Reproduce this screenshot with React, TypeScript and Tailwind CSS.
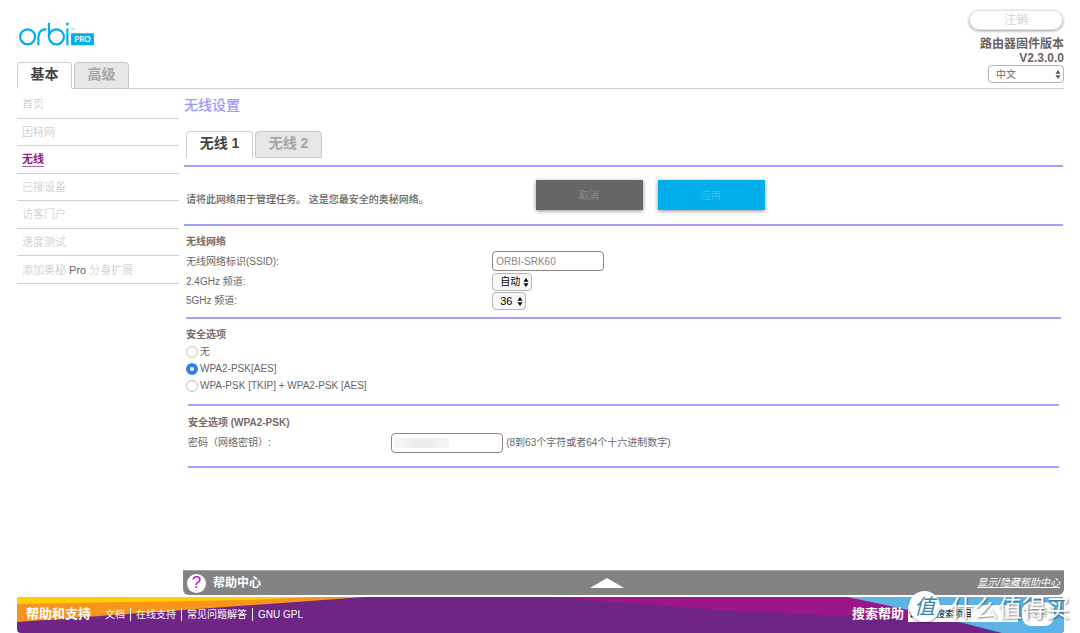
import { ReactNode, useState } from "react";

const menu = ["首页", "因特网", "无线", "已接设备", "访客门户", "速度测试"];
const securityOptions = ["无", "WPA2-PSK[AES]", "WPA-PSK [TKIP] + WPA2-PSK [AES]"];
const supportLinks = ["文档", "在线支持", "常见问题解答", "GNU GPL"];

function Logo() {
  return (
    <svg
      width="76"
      height="25"
      viewBox="0 0 76 25"
      fill="none"
      role="img"
      aria-label="orbi PRO"
    >
      <g stroke="#00aeea" strokeWidth="2.2">
        <circle cx="8.6" cy="14.8" r="7.5" />
        <path d="M19.4 23.3V15.1C19.4 10.3 22.2 7.4 27.4 7.1" />
        <path d="M29.9 0.8V14.8" />
        <circle cx="37.4" cy="14.8" r="7.5" />
        <path d="M48.4 6.5V23.3" />
      </g>
      <rect x="47.1" y="0.7" width="2.6" height="2.6" fill="#00aeea" />
      <path
        d="M52.3 6.5H54M53.1 6.5V8M54.4 8V6.5L55 7.5L55.7 6.5V8"
        stroke="#7fd3f2"
        strokeWidth="0.5"
      />
      <rect x="52" y="11.2" width="23" height="12" rx="1" fill="#00aeea" />
      <text
        x="63.5"
        y="20"
        fill="#fff"
        fontSize="8"
        fontWeight="700"
        textAnchor="middle"
        fontFamily="Lato, sans-serif"
      >
        PRO
      </text>
    </svg>
  );
}

type TabProps = { active: boolean; className?: string; onClick: () => void; children: ReactNode };

function Tab({ active, className = "", onClick, children }: TabProps) {
  return (
    <button
      role="tab"
      aria-selected={active}
      onClick={onClick}
      className={`h-[27px] rounded-t-[4px] border pb-[2px] text-[14px] font-bold ${
        active
          ? "border-[#cfcfcf] border-b-white bg-white text-[#444]"
          : "border-[#c8c8c8] bg-[#e7e7e7] text-[#a5a5a5]"
      } ${className}`}
    >
      {children}
    </button>
  );
}

type PickerProps = { id: string; label?: string; options: string[]; className: string };

function Picker({ id, label, options, className }: PickerProps) {
  return (
    <span className="relative inline-flex justify-self-start">
      <select
        id={id}
        aria-label={label}
        className={`h-[18px] appearance-none rounded-[4px] border border-[#b5b5b5] pl-[7px] ${className}`}
      >
        {options.map((option) => (
          <option key={option}>{option}</option>
        ))}
      </select>
      <svg
        className="pointer-events-none absolute top-[5px] right-[3px]"
        width="6"
        height="9"
        viewBox="0 0 6 9"
        fill={id === "language" ? "#5d5350" : "#000"}
      >
        <path d="M3 0L5.5 3.7H0.5ZM3 9L5.5 5.3H0.5Z" />
      </svg>
    </span>
  );
}

function Header() {
  const [tab, setTab] = useState("基本");
  return (
    <header className="flex items-end justify-between border-b border-[#cfcfcf] pt-[10px]">
      <div>
        <a href="#" className="ml-[2px] block w-fit">
          <Logo />
        </a>
        <div role="tablist" className="mt-[15px] -mb-px flex gap-[2px]">
          {["基本", "高级"].map((name) => (
            <Tab key={name} active={tab === name} className="w-[55px]" onClick={() => setTab(name)}>
              {name}
            </Tab>
          ))}
        </div>
      </div>
      <div className="flex flex-col items-end pb-[5px] text-[#6f625f]">
        <button className="mr-px h-5 w-[94px] rounded-full border border-[#e2e2e2] bg-white text-[12px] leading-[18px] font-light text-[#bdbdbd] shadow-[0_1px_3px_rgba(0,0,0,0.4)]">
          注销
        </button>
        <p className="mt-[7px] text-right text-[12px] leading-[14px] font-bold">
          路由器固件版本
          <br />
          V2.3.0.0
        </p>
        <Picker
          id="language"
          label="语言"
          options={["中文", "English"]}
          className="w-[76px] bg-white text-[10px] text-[#6f625f]"
        />
      </div>
    </header>
  );
}

function Sidebar() {
  return (
    <nav className="w-[162px] shrink-0 pt-[2px]">
      <ul className="flex h-[193px] flex-col text-[11px] font-light text-[#c4c0bf]">
        {menu.map((item) => (
          <li key={item} className="flex flex-1 items-center border-b border-[#d0d0d0] pl-[5px]">
            <a
              href="#"
              className={
                item === "无线"
                  ? "border-b border-[#b565ae] leading-[14px] font-bold text-[#951b88]"
                  : ""
              }
            >
              {item}
            </a>
          </li>
        ))}
        <li className="flex flex-1 items-center border-b border-[#d0d0d0] pl-[5px]">
          <a href="#">
            添加奥秘 <span className="font-normal text-[#6f625f]">Pro</span> 分身扩展
          </a>
        </li>
      </ul>
    </nav>
  );
}

function WirelessSettings() {
  const [network, setNetwork] = useState("无线 1");
  return (
    <section className="text-[10px] text-[#666]">
      <h1 className="pt-[6px] text-[14px] leading-[20px] font-medium text-[#9a98ff]">无线设置</h1>
      <div
        role="tablist"
        className="flex gap-[2px] border-b-2 border-[#a3a1ff] pt-[16px] pb-[7px] pl-[2px]"
      >
        {["无线 1", "无线 2"].map((name) => (
          <Tab
            key={name}
            active={network === name}
            className="w-[67px]"
            onClick={() => setNetwork(name)}
          >
            {name}
          </Tab>
        ))}
      </div>

      <div className="grid grid-cols-[2fr_3fr] items-center border-b-2 border-[#a3a1ff] pt-[13px] pb-[14px]">
        <p className="pt-[8px] pl-[2px] font-medium text-[#666]">
          请将此网络用于管理任务。 这是您最安全的奥秘网络。
        </p>
        <div className="flex gap-[15px]">
          <button className="h-[30px] w-[107px] bg-[#666] font-light text-[#999] shadow-[0_1px_4px_rgba(0,0,0,0.45)]">
            取消
          </button>
          <button className="h-[30px] w-[107px] bg-[#00aeea] font-light text-[#5fc6ea] shadow-[0_1px_4px_rgba(0,0,0,0.45)]">
            应用
          </button>
        </div>
      </div>

      <div className="mx-[2px] border-b-2 border-[#a3a1ff] pt-[8px] pb-[7px]">
        <h2 className="leading-[16px] font-bold text-[#7a6a66]">无线网络</h2>
        <div className="grid h-[22px] grid-cols-[7fr_13fr] items-center">
          <label htmlFor="ssid">无线网络标识(SSID):</label>
          <input
            id="ssid"
            defaultValue="ORBI-SRK60"
            className="h-[20px] w-[112px] rounded-[4px] border border-[#8f8481] px-[3px] text-[10px] text-[#8f8481]"
          />
        </div>
        <div className="grid h-[19px] grid-cols-[7fr_13fr] items-center">
          <label htmlFor="channel24">2.4GHz 频道:</label>
          <Picker
            id="channel24"
            options={["自动", "1", "6", "11"]}
            className="w-[40px] bg-[#f8f8f8] text-[10px] text-black"
          />
        </div>
        <div className="grid h-[19px] grid-cols-[7fr_13fr] items-center">
          <label htmlFor="channel5">5GHz 频道:</label>
          <Picker
            id="channel5"
            options={["36", "40", "44", "48"]}
            className="w-[34px] bg-[#f8f8f8] text-[11px] text-black"
          />
        </div>
      </div>

      <fieldset className="mx-[2px] pt-[8px] pb-[10px]">
        <h2 className="leading-[16px] font-bold text-[#7a6a66]">安全选项</h2>
        {securityOptions.map((option, i) => (
          <label key={option} className="flex h-[17px] items-center gap-[2px]">
            <input
              type="radio"
              name="security"
              defaultChecked={i === 1}
              className="size-[12px] appearance-none rounded-full border border-[#c0c0c0] bg-white checked:border-4 checked:border-[#2f80f7]"
            />
            {option}
          </label>
        ))}
      </fieldset>

      <div className="mx-[4px] border-y-2 border-[#a3a1ff] pt-[9px] pb-[12px]">
        <h2 className="leading-[16px] font-bold text-[#7a6a66]">安全选项 (WPA2-PSK)</h2>
        <div className="grid h-[23px] grid-cols-[7fr_23fr] items-center">
          <label htmlFor="passphrase">密码（网络密钥）:</label>
          <div className="flex items-center gap-[3px]">
            <div className="relative">
              <input
                id="passphrase"
                className="block h-[20px] w-[112px] rounded-[4px] border border-[#8f8481] px-[3px]"
              />
              <span className="pointer-events-none absolute top-[5px] left-[3px] h-[10px] w-[55px] bg-linear-to-r from-[#f6f6f6] via-[#ebebeb] to-[#f3f3f3]" />
            </div>
            <span>(8到63个字符或者64个十六进制数字)</span>
          </div>
        </div>
      </div>
    </section>
  );
}

function HelpBar() {
  return (
    <div className="mb-[2px] ml-[166px] flex h-[25px] items-center justify-between rounded-b-[6px] border-t border-[#a5a5a5] bg-[#838383] pr-[4px] pl-[4px] text-white">
      <div className="flex flex-[12] items-center gap-[7px]">
        <span className="flex size-[19px] items-center justify-center rounded-full bg-white text-[17px] text-[#c800c8]">
          ?
        </span>
        <h2 className="text-[12px] font-bold">帮助中心</h2>
      </div>
      <button aria-label="展开">
        <svg width="34" height="10" viewBox="0 0 34 10" fill="#fff">
          <path d="M17 0L34 10H0Z" />
        </svg>
      </button>
      <div className="flex flex-[13] justify-end pb-[2px]">
        <a href="#" className="text-[10px] italic underline">
          显示/隐藏帮助中心
        </a>
      </div>
    </div>
  );
}

function Watermark() {
  return (
    <div className="pointer-events-none absolute top-[-10px] right-[-6px] flex items-center gap-[10px] text-white">
      <span className="flex size-[31px] items-center justify-center rounded-full bg-white text-[21px] leading-none text-[#3f86ad] italic shadow-[0_1px_2px_rgba(0,0,0,0.4)]">
        值
      </span>
      <span className="pt-[6px] text-[24px] leading-[32px] [text-shadow:1px_1px_2px_rgba(0,0,0,0.5)]">
        什么值得买
      </span>
    </div>
  );
}

function Footer() {
  return (
    <footer className="relative">
      <div className="relative h-[36px] overflow-hidden rounded-[4px]">
        <svg
          className="absolute inset-0 h-full w-full"
          viewBox="0 0 1047 36"
          preserveAspectRatio="none"
        >
          <path d="M0 0H1047V36H0Z" fill="#6e2585" />
          <path d="M0 0H348L0 25Z" fill="#f7941d" />
          <path d="M0 0H295L230 3L0 7Z" fill="#ffcf06" />
          <path d="M530 0H1047V29Q880 22 703 13Z" fill="#9c1687" />
          <path d="M830 0H1047V36H985Q910 16 830 0Z" fill="#5bb4e5" />
        </svg>
        <div className="relative flex h-[33px] items-center justify-between pr-[10px] pl-[9px] text-white">
          <div className="flex items-center">
            <h2 className="mr-[14px] text-[13px] font-bold">帮助和支持</h2>
            <ul className="flex pt-[2px] text-[10px] leading-[13px]">
              {supportLinks.map((link, i) => (
                <li key={link} className={i > 0 ? "ml-[5px] border-l border-white pl-[5px]" : ""}>
                  <a href="#">{link}</a>
                </li>
              ))}
            </ul>
          </div>
          <form className="flex items-center gap-[4px]" onSubmit={(e) => e.preventDefault()}>
            <label htmlFor="search" className="text-[13px] font-bold">
              搜索帮助
            </label>
            <input
              id="search"
              defaultValue="请输入搜索项目"
              className="h-[17px] w-[110px] bg-white px-px text-[9px] text-black"
            />
            <button className="h-[24px] w-[32px] rounded-[9px] bg-white text-[10px] text-[#c4c4c4]">
              搜索
            </button>
          </form>
        </div>
      </div>
      <Watermark />
    </footer>
  );
}

export default function App() {
  return (
    <div className="flex min-h-screen flex-col overflow-x-hidden bg-white pr-[16px] pl-[17px] font-['Liberation_Sans','Noto_Sans_CJK_SC',sans-serif]">
      <Header />
      <div className="flex flex-1 gap-[5px]">
        <Sidebar />
        <main className="min-w-0 flex-1 pr-px pb-6">
          <WirelessSettings />
        </main>
      </div>
      <HelpBar />
      <Footer />
    </div>
  );
}
